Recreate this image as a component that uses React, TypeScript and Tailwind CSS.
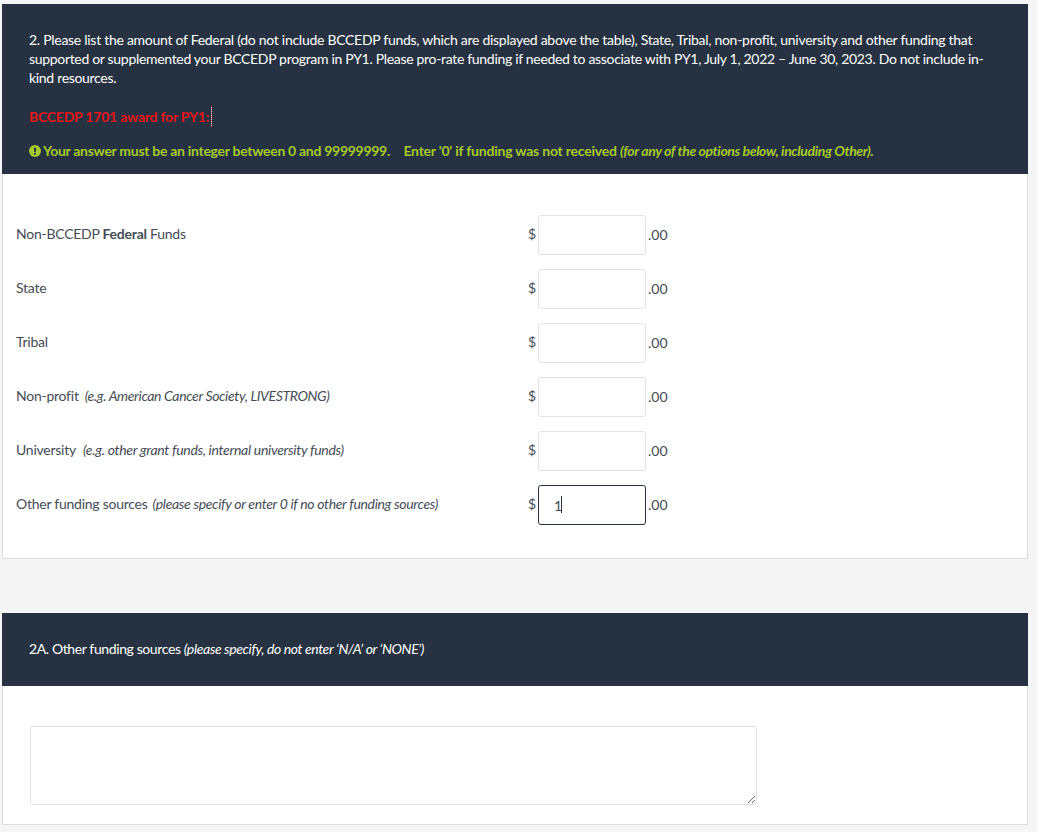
const rows = [
  { label: <>Non-BCCEDP <b className="font-bold">Federal</b> Funds</> },
  { label: <>State</> },
  { label: <>Tribal</> },
  { label: <>Non-profit<i className="ml-[6px] tracking-[-0.36px]">(e.g. American Cancer Society, LIVESTRONG)</i></> },
  { label: <>University<i className="ml-[7px] tracking-[-0.3px]">(e.g. other grant funds, internal university funds)</i></> },
  { label: <>Other funding sources<i className="ml-[5px] tracking-[-0.33px]">(please specify or enter 0 if no other funding sources)</i></>, value: '1' },
];

function AmountRow({ label, value }: { label: React.ReactNode; value?: string }) {
  return (
    <div className="flex h-[54px] items-center">
      <div className="w-[525px] pb-[4px] pl-[13px] text-[14px] tracking-[-0.25px] text-[#444c55]">{label}</div>
      <span className="w-[10px] pb-[4px] text-[14px] text-[#444c55]">$</span>
      <div className="relative">
        <input
          readOnly
          value={value ?? ''}
          className={`block h-[40px] w-[108px] rounded-[3px] border bg-white pl-[15px] text-[14px] text-[#444c55] outline-none ${value ? 'border-[#26323f]' : 'border-[#e2e5e8]'}`}
        />
        {value && <span className="absolute left-[23px] top-[11px] h-[17px] w-px bg-[#26323f]" />}
      </div>
      <span className="ml-[2px] pb-[2px] text-[14px] text-[#444c55]">.00</span>
    </div>
  );
}

export default function App() {
  return (
    <div className="min-h-[832px] bg-[#f5f5f5] pl-[2px] pr-[9px] pt-[4px] font-['Lato','Open_Sans',sans-serif]">
      <section className="h-[555px] border border-t-0 border-[#dcdcdc] bg-white">
        <div className="-mx-px h-[170px] bg-[#263241] px-[27px] pt-[26px] text-[14px] leading-[19px] text-white">
          <p>
            <span className="tracking-[-0.28px]">2. Please list the amount of Federal (do not include BCCEDP funds, which are displayed above the table), State, Tribal, non-profit, university and other funding that </span>
            <span className="tracking-[-0.315px]">supported or supplemented your BCCEDP program in PY1. Please pro-rate funding if needed to associate with PY1, July 1, 2022 – June 30, 2023. Do not include in-kind resources.</span>
          </p>
          <p className="mt-[20px] flex h-[19px] items-center font-bold tracking-[-0.22px] text-[#e3161c]">
            BCCEDP 1701 award for PY1:
            <span className="ml-[2px] inline-block h-[21px] w-px border-l border-dotted border-[#e3161c] bg-white" />
          </p>
          <p className="mt-[15px] flex items-center font-bold tracking-[-0.29px] text-[#a8c92b]">
            <svg viewBox="0 0 12 12" className="mr-[2px] h-[12px] w-[12px]">
              <circle cx="6" cy="6" r="6" fill="#a8c92b" />
              <rect x="5" y="2.4" width="2" height="4.6" rx="0.8" fill="#263241" />
              <circle cx="6" cy="8.8" r="1.1" fill="#263241" />
            </svg>
            <span className="whitespace-pre">
              Your answer must be an integer between 0 and 99999999.{'    '}
              <span className="ml-[1px] tracking-[-0.22px]">Enter '0' if funding was not received </span>
              <i className="tracking-[-0.38px]">(for any of the options below, including Other).</i>
            </span>
          </p>
        </div>
        <div className="pt-[34px]">
          {rows.map((row, i) => (
            <AmountRow key={i} label={row.label} value={row.value} />
          ))}
        </div>
      </section>

      <section className="mt-[54px] h-[212px] border border-t-0 border-[#dcdcdc] bg-white">
        <div className="-mx-px flex h-[73px] items-center bg-[#263241] px-[27px] pb-[2px] text-[14px] tracking-[-0.39px] text-white">
          <p>2A. Other funding sources <i>(please specify, do not enter ‘N/A’ or ‘NONE’)</i></p>
        </div>
        <div className="pl-[27px] pt-[40px]">
          <textarea readOnly className="block h-[79px] w-[727px] rounded-[3px] border border-[#e2e2e2] bg-white outline-none" />
        </div>
      </section>
    </div>
  );
}
